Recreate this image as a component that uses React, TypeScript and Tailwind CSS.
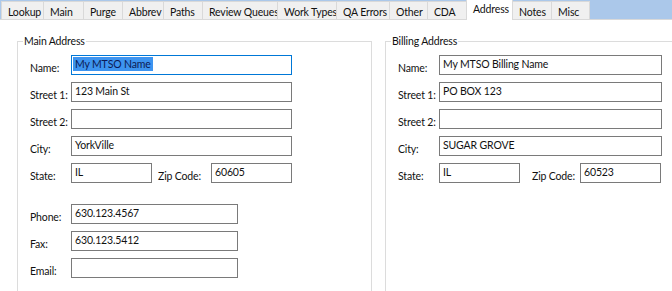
const tabs = [
  { label: "Lookup", w: 43 },
  { label: "Main", w: 41 },
  { label: "Purge", w: 40 },
  { label: "Abbrev", w: 42 },
  { label: "Paths", w: 40 },
  { label: "Review Queues", w: 76 },
  { label: "Work Types", w: 60 },
  { label: "QA Errors", w: 54 },
  { label: "Other", w: 39 },
  { label: "CDA", w: 40 },
  { label: "Address", w: 47, active: true },
  { label: "Notes", w: 40 },
  { label: "Misc", w: 39 },
]

function Box({ value, w, focused, selected }: { value?: string; w: string; focused?: boolean; selected?: boolean }) {
  return (
    <div
      className={`flex h-[20px] shrink-0 items-start border bg-white pl-[1px] pt-[1px] leading-[14px] ${w} ${
        focused ? "border-[#0078d7]" : "border-[#7a7a7a]"
      }`}
    >
      {selected ? (
        <span className="bg-[#3d94f0] px-[2px] text-[#0c1a55]">{value}</span>
      ) : (
        <span className="px-[2px]">{value}</span>
      )}
    </div>
  )
}

function Label({ text, w = "w-[41px]" }: { text: string; w?: string }) {
  return <span className={`${w} shrink-0 translate-y-[3px] whitespace-nowrap leading-[14px]`}>{text}</span>
}

function Row({ label, children }: { label: string; children: React.ReactNode }) {
  return (
    <div className="flex h-[20px] items-center">
      <Label text={label} />
      {children}
    </div>
  )
}

function AddressGroup({
  title,
  name,
  street1,
  city,
  state,
  zip,
  width,
  inputW,
  zipLabelW,
  focusName,
  extra,
}: {
  title: string
  name: string
  street1: string
  city: string
  state: string
  zip: string
  width: string
  inputW: string
  zipLabelW: string
  focusName?: boolean
  extra?: boolean
}) {
  return (
    <fieldset className={`h-[262px] shrink-0 border border-[#dcdcdc] pl-[12px] ${width}`}>
      <legend className="-ml-[7px] whitespace-nowrap px-[1px] leading-[14px]">{title}</legend>
      <div className="flex flex-col gap-[7px] pt-[7px]">
        <Row label="Name:">
          <Box value={name} w={inputW} focused={focusName} selected={focusName} />
        </Row>
        <Row label="Street 1:">
          <Box value={street1} w={inputW} />
        </Row>
        <Row label="Street 2:">
          <Box w={inputW} />
        </Row>
        <Row label="City:">
          <Box value={city} w={inputW} />
        </Row>
        <div className="flex h-[20px] items-center">
          <Label text="State:" />
          <Box value={state} w="w-[81px]" />
          <Label text="Zip Code:" w={zipLabelW} />
          <Box value={zip} w="w-[81px]" />
        </div>
        {extra && (
          <div className="flex flex-col gap-[7px] pt-[14px]">
            <Row label="Phone:">
              <Box value="630.123.4567" w="w-[167px]" />
            </Row>
            <Row label="Fax:">
              <Box value="630.123.5412" w="w-[167px]" />
            </Row>
            <Row label="Email:">
              <Box w="w-[167px]" />
            </Row>
          </div>
        )}
      </div>
    </fieldset>
  )
}

export default function App() {
  return (
    <div
      className="h-[291px] w-[672px] overflow-hidden bg-white text-[10.5px] tracking-[-0.15px] text-[#111]"
      style={{ fontFamily: 'Lato, "Noto Sans", sans-serif' }}
    >
      <div className="flex h-[20px] items-end border-b border-[#d9d9d9] bg-[#abc8ea] pl-[1px]">
        {tabs.map((t) =>
          t.active ? (
            <div
              key={t.label}
              className="-mb-px -ml-px flex h-[21px] shrink-0 items-start whitespace-nowrap border border-b-0 border-[#d9d9d9] bg-white pl-[6px] pt-[2px] leading-[14px]"
              style={{ width: t.w }}
            >
              {t.label}
            </div>
          ) : (
            <div
              key={t.label}
              className="-ml-px flex h-[18px] shrink-0 items-start whitespace-nowrap border border-b-0 border-[#d9d9d9] bg-[#f0f0f0] pl-[6px] pt-[3px] leading-[14px] first:ml-0"
              style={{ width: t.w }}
            >
              {t.label}
            </div>
          ),
        )}
      </div>
      <div className="flex gap-[13px] pl-[17px] pt-[14px]">
        <AddressGroup
          title="Main Address"
          name="My MTSO Name"
          street1="123 Main St"
          city="YorkVille"
          state="IL"
          zip="60605"
          width="w-[355px]"
          inputW="w-[221px]"
          zipLabelW="w-[59px] pl-[6px]"
          focusName
          extra
        />
        <AddressGroup
          title="Billing Address"
          name="My MTSO Billing Name"
          street1="PO BOX 123"
          city="SUGAR GROVE"
          state="IL"
          zip="60523"
          width="w-[300px]"
          inputW="w-[223px]"
          zipLabelW="w-[60px] pl-[12px]"
        />
      </div>
    </div>
  )
}
